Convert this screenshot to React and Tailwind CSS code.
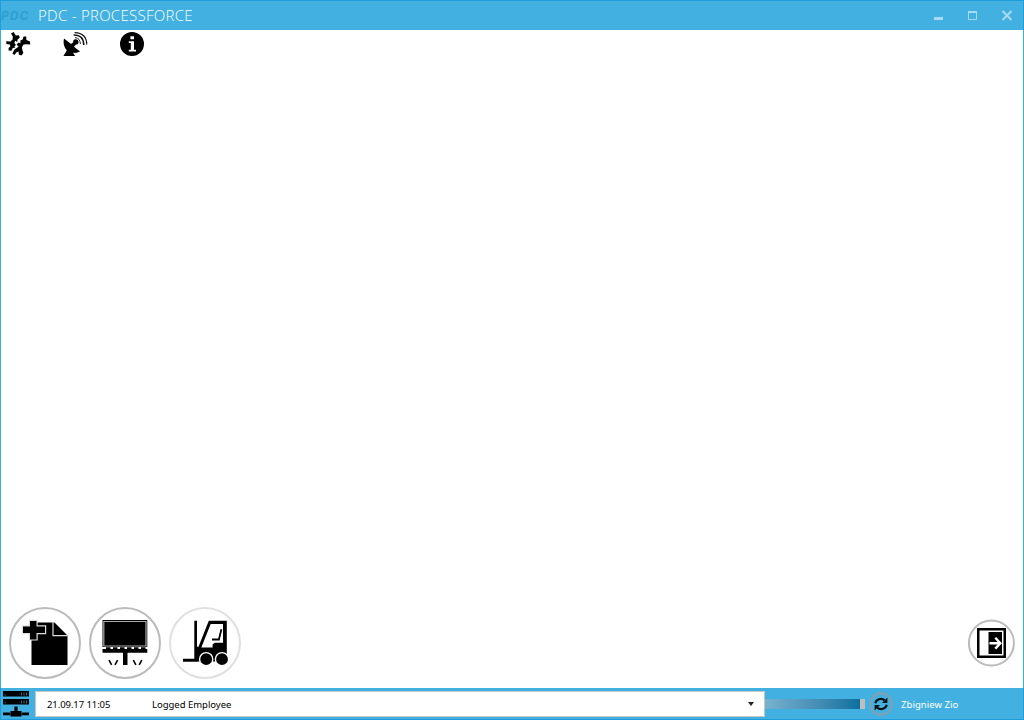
import React from "react";

function GearsIcon() {
  return (
    <svg viewBox="0 0 28 28" className="h-7 w-7">
      <path d="M7 3.4 L9.6 2 L11.8 5.6 L14.8 5.2 L15.8 7.6 L13.6 9.6 L13.2 12 L11.2 10.8 L10.4 13 L12 15 L10.4 16.2 L11.4 17.6 L8.8 18 L7.4 20.8 L4.6 20.4 L4.6 18 L6.4 16.6 L5.8 14.4 L2.4 14 L2.2 11.2 L6.4 11.4 L8.6 9.4 L8.8 6.4 Z" />
      <path d="M18.6 9.6 L19.6 6.6 L22.2 6.6 L22.4 10 L26 11.4 L26.2 14.6 L22.6 14.2 L19.6 14.6 L18 17 L18.2 19.6 L19.4 23 L17.4 25.4 L14.8 24.4 L14.6 21.4 L12.6 22.2 L10.4 25 L8.4 23.4 L10.2 19.8 L12.8 18 L14.6 16.6 L12.6 14.8 L14.4 12.4 L16.4 13.2 L16.4 10.6 Z" />
    </svg>
  );
}

function SatelliteIcon() {
  return (
    <svg viewBox="0 0 28 28" className="h-7 w-7">
      <path d="M3 8.5 L10 14 L12.2 12.2 A2.7 2.7 0 1 1 15 14.6 L13 16.8 L19 21.6 Q15 23.6 12 22.6 L14 26 H2.4 L5.8 20.4 Q1.4 15.2 3 8.5Z" />
      <g fill="none" stroke="#111">
        <path d="M14 7.6 Q19.2 8 19.4 14" strokeWidth="0.9" />
        <path d="M12.6 5 Q22.4 4.6 22.8 15" strokeWidth="1.6" />
        <path d="M13.6 2.6 Q25.6 3 25.8 14.6" strokeWidth="1.1" />
      </g>
    </svg>
  );
}

function InfoIcon() {
  return (
    <svg viewBox="0 0 24 24" className="h-6 w-6">
      <circle cx="12" cy="12" r="12" />
      <path fill="#fff" d="M10.4 4.2h3.6v3h-3.6zM8.8 9.2h5.2v8.6h2v1.8H8.8v-1.8h2v-6.8h-2z" />
    </svg>
  );
}

function NewDocumentButton() {
  return (
    <button aria-label="New document" className="h-[72px] w-[72px]">
      <svg viewBox="0 0 72 72" className="h-full w-full">
        <circle cx="36" cy="36" r="35" fill="#fff" stroke="#bbb" strokeWidth="2" />
        <path d="M22.5 15.5H45.5L58.5 28.5V58H22.5Z" />
        <path d="M44 15V28.6H58.8" fill="none" stroke="#ddd" strokeWidth="1.2" />
        <path d="M21 14h6.5v5.5h8.5v6.5h-8.5v6.4h-6.5v-6.4h-7v-6.5h7z" stroke="#ddd" strokeWidth="2.4" paintOrder="stroke" />
      </svg>
    </button>
  );
}

function BillboardButton() {
  return (
    <button aria-label="Board" className="h-[72px] w-[72px]">
      <svg viewBox="0 0 72 72" className="h-full w-full">
        <circle cx="36" cy="36" r="35" fill="#fff" stroke="#bbb" strokeWidth="2" />
        <path d="M13.5 13h44.8v27H13.5z" />
        <path d="M14.8 14.5h42.2v24.5H14.8z" fill="none" stroke="#aaa" strokeWidth="1.2" />
        <path d="M13.5 42h44.8v3.7H38.5V58h-4.5V45.7H13.5z" />
        <path d="M17 41.2H57" stroke="#000" strokeWidth="2" strokeDasharray="4.5 2.5" />
        <path d="M20 53.2l2.6 4.6M28.6 53.2l-2.6 4.6M44.3 53.2l2.6 4.6M52.8 53.2l-2.6 4.6" stroke="#000" strokeWidth="1.6" />
      </svg>
    </button>
  );
}

function ForkliftButton() {
  return (
    <button aria-label="Forklift" className="h-[72px] w-[72px]">
      <svg viewBox="0 0 72 72" className="h-full w-full">
        <circle cx="36" cy="36" r="35" fill="#fff" stroke="#e0e0e0" strokeWidth="2" />
        <path d="M25.3 13.7H28V39.7H29.5L39.8 13.7H57.8V52H48V54.5H29.3V54.7H14V51.8H25.3Z" />
        <path fill="#fff" d="M41.7 17H54V35.7H45.8L43.6 37.4V40.6H32.3Z" />
        <path d="M52.4 22.3L49.9 32.5H43" fill="none" stroke="#000" strokeWidth="1.8" />
        <circle cx="37.2" cy="52.2" r="6.6" stroke="#fff" strokeWidth="1.4" />
        <circle cx="53" cy="52.2" r="6.6" stroke="#fff" strokeWidth="1.4" />
      </svg>
    </button>
  );
}

function ExitButton() {
  return (
    <button aria-label="Log out" className="h-[48px] w-[48px]">
      <svg viewBox="0 0 48 48" className="h-full w-full">
        <circle cx="24.4" cy="24" r="22.5" fill="#fff" stroke="#bbb" strokeWidth="2" />
        <path d="M10 9h29v30H10z" />
        <path d="M12.5 11.5h24v25h-24z" fill="#fff" />
        <path d="M21.5 13h13.5v22H21.5z" />
        <path d="M22.5 24.2H33M28.3 18.8L33.3 24.2L28.3 29.6" fill="none" stroke="#fff" strokeWidth="2.4" />
      </svg>
    </button>
  );
}

function ServerIcon() {
  return (
    <svg viewBox="0 0 26 26" className="h-[26px] w-[26px]">
      <path d="M0 0h26v5.5H0zM0 8h26v5.5H0zM11.4 15.5h3.2V20h3.9v1.5H26v2.8h-7.5v1.2h-11v-1.2H0v-2.8h7.5V20h3.9z" />
      <path d="M18.5 1.5v3M21 1.5v3M23.5 1.5v3M18.5 9.5v3M21 9.5v3M23.5 9.5v3M1.5 4h1.4M1.5 11.7h1.4" stroke="#347c9c" strokeWidth="0.9" />
      <path d="M7.2 21v3.5M18.8 21v3.5" stroke="#347c9c" strokeWidth="0.6" />
    </svg>
  );
}

function RefreshIcon() {
  return (
    <svg viewBox="0 0 24 24" className="h-6 w-6">
      <circle cx="12" cy="12" r="10.8" fill="none" stroke="#849faf" strokeWidth="1.9" />
      <path d="M6.3 11.2C7 7.2 12.4 5.5 15.7 8.4M17.7 12.8C17 16.8 11.6 18.5 8.3 15.6" fill="none" stroke="#111" strokeWidth="2.2" />
      <path d="M18.4 5.6V11H13zM5.6 18.4V13H11z" fill="#111" />
    </svg>
  );
}

export default function App() {
  return (
    <div className="flex h-[720px] w-[1024px] flex-col overflow-hidden bg-white font-['Noto_Sans',sans-serif] text-black">
      <header className="flex h-[30px] shrink-0 items-center border-x border-t border-[#1b9edb] bg-[#42b1e1] pr-[11px]">
        <span className="w-[37px] font-['Inter',sans-serif] text-[12px] leading-[29px] font-bold tracking-[1px] text-[#2f9fd0] italic">PDC</span>
        <h1 className="flex-1 font-['Open_Sans',sans-serif] text-[15px] leading-[29px] font-light tracking-[0.27px] whitespace-nowrap text-white">PDC - PROCESSFORCE</h1>
        <div className="flex items-center">
          <svg viewBox="0 0 78 12" className="h-3 w-[78px]" fill="none" stroke="#a9daf0">
            <path d="M0 8.5h9" strokeWidth="3" />
            <path d="M34.5 1.5h8v8h-8z" />
            <path d="M34 2h9" strokeWidth="2" />
            <path d="M68.5 1l9 9M77.5 1l-9 9" strokeWidth="2" />
          </svg>
        </div>
      </header>

      <main className="flex flex-1 flex-col justify-between border-x border-[#3aaee0]">
        <nav className="flex h-7 items-center">
          <button aria-label="Settings" className="ml-[3px]"><GearsIcon /></button>
          <button aria-label="Connection" className="ml-[29px]"><SatelliteIcon /></button>
          <button aria-label="Information" className="ml-[31px]"><InfoIcon /></button>
        </nav>
        <div className="flex items-center justify-between pr-2 pb-[9px] pl-2">
          <div className="flex gap-2">
            <NewDocumentButton />
            <BillboardButton />
            <ForkliftButton />
          </div>
          <ExitButton />
        </div>
      </main>

      <footer className="flex h-8 shrink-0 items-center border-x border-b border-[#1b9edb] bg-[#42b1e1]">
        <div className="w-[34px] pl-0.5"><ServerIcon /></div>
        <div className="mt-px flex h-[26px] w-[730px] items-center border border-[#c6c6c6] bg-white pr-[10px] pl-[11px] text-[9.5px]">
          <span className="w-[105px] pt-[3px] tracking-[-0.08px]">21.09.17 11:05</span>
          <span className="flex-1 pt-[3px] tracking-[-0.02px]">Logged Employee</span>
          <svg viewBox="0 0 6 4" className="h-1 w-1.5"><path d="M0 0h6L3 4z" fill="#222" /></svg>
        </div>
        <div className="h-[10px] w-[95px] bg-linear-to-r from-[#79b2d0] to-[#08709f]" />
        <div className="h-[10px] w-[5px] bg-[#bebebe]" />
        <div className="ml-[4px]"><RefreshIcon /></div>
        <span className="ml-[8px] pt-[4px] text-[9.5px] tracking-[0.05px] whitespace-nowrap text-white">Zbigniew Zio</span>
      </footer>
    </div>
  );
}
